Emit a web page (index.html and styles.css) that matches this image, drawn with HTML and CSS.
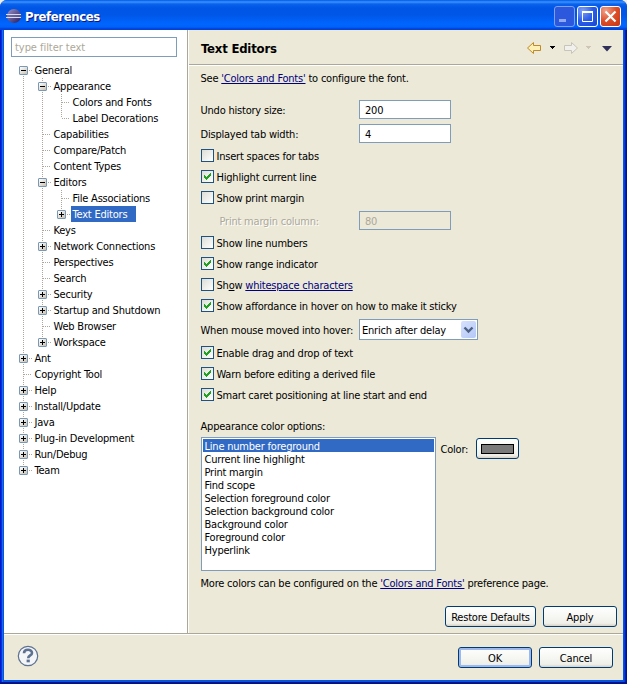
FILE: index.html
```
<!DOCTYPE html>
<html lang="en">
<head>
<meta charset="utf-8">
<title>Preferences</title>
<link rel="stylesheet" href="styles.css">
</head>
<body>
<div class="window">
  <header class="titlebar">
    <svg class="logo" width="16" height="16" viewBox="0 0 16 16"><defs><linearGradient id="g" x2="1" y2="1"><stop offset="0" stop-color="#9a92c8"/><stop offset="1" stop-color="#241a5c"/></linearGradient></defs><circle cx="8" cy="8" r="7" fill="url(#g)"/><path d="M0 6.500h15M0 9.500h15" stroke="#d8dcf4"/><path d="M1 8h14" stroke="#6d68a8"/></svg>
    <h1>Preferences</h1>
    <div class="controls">
      <span class="ctl min"><svg width="19" height="19"><path d="M4 13.500h7" stroke="#8fa8f0" stroke-width="3"/></svg></span>
      <span class="ctl"><svg width="19" height="19"><path d="M4.500 5v9.500h10V5M4 5.500h11" fill="none" stroke="#fff"/><path d="M4 5h11" stroke="#fff" stroke-width="2"/></svg></span>
      <span class="ctl close"><svg width="19" height="19"><path d="M4.500 4.500l10 10M14.500 4.500l-10 10" stroke="#fff" stroke-width="2.200"/></svg></span>
    </div>
  </header>
  <div class="panes">
    <nav class="side">
      <div class="filter">type filter text</div>
      <ul class="tree">
        <li class="first"><div class="row"><i class="box open"></i><span>General</span></div>
          <ul>
            <li><div class="row"><i class="box open"></i><span>Appearance</span></div>
              <ul>
                <li><div class="row"><i></i><span>Colors and Fonts</span></div></li>
                <li><div class="row"><i></i><span>Label Decorations</span></div></li>
              </ul></li>
            <li><div class="row"><i></i><span>Capabilities</span></div></li>
            <li><div class="row"><i></i><span>Compare/Patch</span></div></li>
            <li><div class="row"><i></i><span>Content Types</span></div></li>
            <li><div class="row"><i class="box open"></i><span>Editors</span></div>
              <ul>
                <li><div class="row"><i></i><span>File Associations</span></div></li>
                <li><div class="row"><i class="box"></i><span class="selected">Text Editors</span></div></li>
              </ul></li>
            <li><div class="row"><i></i><span>Keys</span></div></li>
            <li><div class="row"><i class="box"></i><span>Network Connections</span></div></li>
            <li><div class="row"><i></i><span>Perspectives</span></div></li>
            <li><div class="row"><i></i><span>Search</span></div></li>
            <li><div class="row"><i class="box"></i><span>Security</span></div></li>
            <li><div class="row"><i class="box"></i><span>Startup and Shutdown</span></div></li>
            <li><div class="row"><i></i><span>Web Browser</span></div></li>
            <li><div class="row"><i class="box"></i><span>Workspace</span></div></li>
          </ul></li>
        <li><div class="row"><i class="box"></i><span>Ant</span></div></li>
        <li><div class="row"><i></i><span>Copyright Tool</span></div></li>
        <li><div class="row"><i class="box"></i><span>Help</span></div></li>
        <li><div class="row"><i class="box"></i><span>Install/Update</span></div></li>
        <li><div class="row"><i class="box"></i><span>Java</span></div></li>
        <li><div class="row"><i class="box"></i><span>Plug-in Development</span></div></li>
        <li><div class="row"><i class="box"></i><span>Run/Debug</span></div></li>
        <li><div class="row"><i class="box"></i><span>Team</span></div></li>
      </ul>
    </nav>
    <main class="page">
      <div class="page-head">
        <h2>Text Editors</h2>
        <svg width="88" height="16" viewBox="0 0 88 16">
          <path d="M1.500 8L7.500 2.500V5.500H14.500V10.500H7.500V13.500Z" fill="#fdf0b4" stroke="#c08a28"/>
          <path d="M24 6h5v1h-1v1h-1v1h-1V8h-1V7h-1z" fill="#000"/>
          <path d="M51.500 8L45.500 2.500V5.500H38.500V10.500H45.500V13.500Z" fill="#f1f0ec" stroke="#c6c4bd"/>
          <path d="M60 6h5v1h-1v1h-1v1h-1V8h-1V7h-1z" fill="#cdc5b5"/>
          <path d="M76 6h10l-5 5.500z" fill="#303058"/>
        </svg>
      </div>
      <div class="form">
        <p class="see">See <a>'Colors and Fonts'</a> to configure the font.</p>
        <div class="field undo"><label>Undo history size:</label><div class="input">200</div></div>
        <div class="field tab"><label>Displayed tab width:</label><div class="input">4</div></div>
        <div class="check after-field"><b></b><span>Insert spaces for tabs</span></div>
        <div class="check"><b class="on"></b><span>Highlight current line</span></div>
        <div class="check"><b></b><span>Show print margin</span></div>
        <div class="field margin disabled"><label>Print margin column:</label><div class="input">80</div></div>
        <div class="check after-field"><b></b><span>Show line numbers</span></div>
        <div class="check"><b class="on"></b><span>Show range indicator</span></div>
        <div class="check"><b></b><span>Sh<u>o</u>w <a>whitespace characters</a></span></div>
        <div class="check"><b class="on"></b><span>Show affordance in hover on how to make it sticky</span></div>
        <div class="field hover"><label>When mouse moved into hover:</label><div class="combo"><span>Enrich after delay</span><em><svg width="15" height="17"><path d="M3.500 6.500l4 4 4-4" fill="none" stroke="#4d6185" stroke-width="2.400"/></svg></em></div></div>
        <div class="check after-field"><b class="on"></b><span>Enable drag and drop of text</span></div>
        <div class="check"><b class="on"></b><span>Warn before editing a derived file</span></div>
        <div class="check"><b class="on"></b><span>Smart caret positioning at line start and end</span></div>
        <p class="options">Appearance color options:</p>
        <div class="colors">
          <ul class="list">
            <li class="selected">Line number foreground</li>
            <li>Current line highlight</li>
            <li>Print margin</li>
            <li>Find scope</li>
            <li>Selection foreground color</li>
            <li>Selection background color</li>
            <li>Background color</li>
            <li>Foreground color</li>
            <li>Hyperlink</li>
          </ul>
          <span class="color-label">Color:</span>
          <div class="button swatch"><s></s></div>
        </div>
        <p class="more">More colors can be configured on the <a>'Colors and Fonts'</a> preference page.</p>
        <div class="actions"><div class="button restore">Restore Defaults</div><div class="button">Apply</div></div>
      </div>
    </main>
  </div>
  <footer class="footer">
    <svg class="help" width="22" height="22" viewBox="0 0 22 22"><circle cx="11" cy="11" r="9.700" fill="#f4f5f6" stroke="#5d7292" stroke-width="1.200"/><path d="M7 8.200C7 3.700 15 3.800 15 7.900C15 10.600 11.200 10.300 11.200 13.300" fill="none" stroke="#5d7292" stroke-width="2.600"/><path d="M9.600 14.600h3.200v2.700H9.600z" fill="#5d7292"/></svg>
    <div class="button ok">OK</div>
    <div class="button">Cancel</div>
  </footer>
</div>
</body>
</html>
```
FILE: styles.css
```
*, *::before { box-sizing: border-box; }
body {
  margin: 0;
  background: #f0efe6;
  color: #000;
  font: 11px/16px "DejaVu Sans Condensed", "DejaVu Sans", sans-serif;
  letter-spacing: -0.21px;
}
h1, h2, p, ul { margin: 0; padding: 0; list-style: none; }
.window {
  width: 627px;
  height: 684px;
  display: flex;
  flex-direction: column;
  padding: 0 4px 4px;
  border-radius: 7px 7px 0 0;
  background: linear-gradient(90deg, #0019cf 0 1px, #0831d9 1px 2px, #166aee 2px 3px, #0855dd 3px 4px, #0855dd 4px 623px, #0855dd 623px 624px, #0441d8 624px 625px, #001dbe 625px 626px, #00138c 626px);
  box-shadow: inset 0 -2px #00138c;
  overflow: hidden;
}
.titlebar {
  height: 30px;
  margin: 0 -4px;
  padding: 2px 6px 0;
  display: flex;
  align-items: center;
  gap: 3px;
  flex: none;
  background: linear-gradient(#0058e6 0, #3a93ff 2px, #0a62ec 4px, #0055e5 8px, #0057e7 15px, #0066ff 24px, #0062f8 27px, #003dd7 29px, #0048dc);
  color: #fff;
}
.titlebar h1 { font: bold 13px/18px "DejaVu Sans Condensed", sans-serif; letter-spacing: -0.4px; text-shadow: 1px 1px #0a1883; margin-top: 1px; }
.controls { display: flex; gap: 2px; margin-left: auto; }
.ctl { width: 21px; height: 21px; border: 1px solid #fff; border-radius: 3px; background: radial-gradient(circle at 25% 20%, #7f9ff5, #2a5be8 50%, #1746d0); }
.ctl svg { display: block; }
.ctl.min { border-color: #7f9ff0; background: #2b58dc; }
.ctl.close { background: radial-gradient(circle at 25% 20%, #f0a08a, #dd4d28 50%, #c43510); }
.panes { height: 605px; display: flex; border-bottom: 1px solid #fff; box-shadow: inset 0 -1px #aca899; padding-bottom: 1px; background: #fff; flex: none; }
.side { width: 185px; border-right: 1px solid #fff; box-shadow: inset -1px 0 #aca899; padding: 7px 10px 0 7px; }
.filter { width: 166px; height: 20px; border: 1px solid #7f9db9; padding-left: 3px; line-height: 19px; color: #aca899; letter-spacing: -0.05px; }
.tree { margin: 5px 0 0 3px; }
.tree ul { padding-left: 19px; }
.tree li { position: relative; }
.tree li::before { content: ""; position: absolute; left: 9px; top: 0; bottom: 0; width: 1px; background: repeating-linear-gradient(#aca899 0 1px, #fff 1px 2px); }
.tree li:last-child::before { bottom: auto; height: 8px; }
.tree li.first::before { top: 8px; }
.row { position: relative; display: flex; align-items: center; height: 16px; }
.row i { width: 19px; height: 1px; flex: none; display: flex; background: repeating-linear-gradient(90deg, #aca899 0 1px, #fff 1px 2px) no-repeat 10px 0 / 7px 1px; }
.row i.box { height: 9px; background-position: 15px 4px; background-size: 3px 1px; }
.box::before { content: ""; width: 9px; height: 9px; margin-left: 5px; border: 1px solid #7898b5; border-radius: 1px; background: linear-gradient(#000, #000) center / 5px 1px no-repeat, linear-gradient(#000, #000) center / 1px 5px no-repeat, linear-gradient(135deg, #fff, #c9c2b3); }
.box.open::before { background: linear-gradient(#000, #000) center / 5px 1px no-repeat, linear-gradient(135deg, #fff, #c9c2b3); }
.row span { height: 16px; line-height: 18px; padding: 0 1.5px; white-space: nowrap; }
.row .selected { width: 65px; }
.selected { background: #316ac5; color: #fff; }
.page { flex: 1; background: #ece9d8; white-space: nowrap; }
.page-head { height: 36px; border-bottom: 1px solid #fff; box-shadow: inset 0 -1px #aca899; display: flex; align-items: center; justify-content: space-between; padding: 0 9px 0 12px; }
.page-head h2 { font: bold 13px/18px "DejaVu Sans Condensed", sans-serif; letter-spacing: -0.2px; padding-top: 2px; }
.form { display: flex; flex-direction: column; padding: 0 6px 0 12px; }
.form a { color: #00007f; text-decoration: underline; }
.form p { height: 16px; line-height: 18px; text-indent: -0.5px; }
.form .see { margin-top: 4px; }
.field { display: flex; height: 19px; align-items: center; }
.field label { width: 158px; flex: none; padding-top: 2px; text-indent: -0.5px; }
.input { width: 92px; height: 19px; border: 1px solid #7f9db9; background: #fff; padding-left: 5px; line-height: 19px; }
.undo { margin-top: 14px; }
.tab { margin-top: 5px; }
.margin { margin-top: 7px; }
.disabled { color: #aca899; }
.disabled label { padding-left: 19px; text-shadow: 1px 1px #fff; }
.disabled .input { background: none; }
.hover { height: 21px; margin-top: 7px; }
.combo { width: 119px; height: 21px; border: 1px solid #7f9db9; background: #fff; display: flex; align-items: center; justify-content: space-between; padding: 0 1px 0 2px; }
.combo span { padding-top: 2px; }
.combo em { width: 15px; height: 17px; background: linear-gradient(135deg, #d6e1fd, #b4c8f6); border-radius: 2px; }
.combo svg { display: block; }
.check { display: flex; height: 13px; align-items: center; gap: 2.5px; margin-top: 8px; }
.check span { padding-top: 2px; }
.check.after-field { margin-top: 6px; }
.check b { width: 13px; height: 13px; border: 1px solid #1d5281; background: linear-gradient(135deg, #dcdcd7, #fff); flex: none; }
.check .on { display: flex; }
.on::before { content: ""; width: 1px; height: 3px; margin: 4px 0 0 2px; background: #21a121; box-shadow: 1px 1px #21a121, 2px 2px #21a121, 3px 1px #21a121, 4px 0 #21a121, 5px -1px #21a121, 6px -2px #21a121; }
.form .options { margin-top: 17px; }
.colors { display: flex; margin-top: 3px; align-items: flex-start; }
.list { width: 235px; height: 134px; border: 1px solid #7f9db9; background: #fff; padding: 1px; }
.list li { height: 13px; line-height: 15px; padding-left: 1.5px; }
.color-label { margin: 5px 0 0 4.5px; width: 35.5px; }
.button { width: 74px; height: 21px; border: 1px solid #003c74; border-radius: 3px; background: linear-gradient(#fff, #f0f0ea 85%, #d6d0c5); text-align: center; line-height: 21px; white-space: nowrap; }
.swatch { width: 43px; display: flex; justify-content: center; align-items: center; margin-top: 1px; }
.swatch s { width: 33px; height: 10px; border: 1px solid #000; background: #7a7a7a; }
.form .more { margin-top: 4px; }
.actions { display: flex; justify-content: flex-end; gap: 7px; margin-top: 15px; }
.restore { width: 91px; }
.footer { flex: 1; background: #ece9d8; display: flex; padding: 12px 10px 0 13px; gap: 7px; }
.help { margin-top: -2px; }
.ok { margin-left: auto; box-shadow: inset 0 0 0 2px #9db8ec; }
```
